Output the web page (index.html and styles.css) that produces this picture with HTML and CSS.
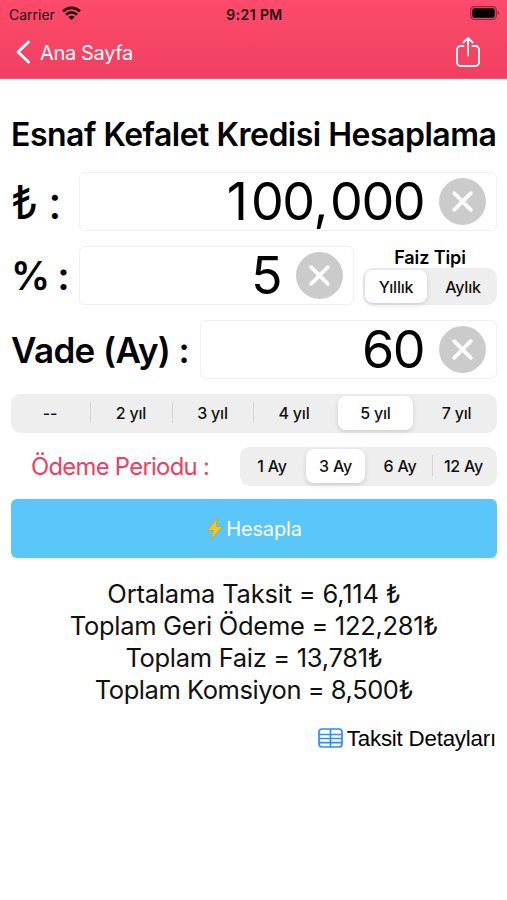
FILE: index.html
```html
<!DOCTYPE html>
<html lang="tr">
<head>
<meta charset="utf-8">
<title>Esnaf Kefalet Kredisi Hesaplama</title>
<link rel="stylesheet" href="styles.css">
</head>
<body>
<header class="top">
  <div class="status">
    <div class="carrier"><span>Carrier</span>
      <svg width="19" height="14" viewBox="0 0 19 14" fill="none" stroke="#250a10" stroke-width="2.700"><path d="M1 5.300a12.200 12.200 0 0 1 17 0"/><path d="M4 8.700a7.900 7.900 0 0 1 11 0"/><path d="M9.500 14 6.400 11a4.400 4.400 0 0 1 6.200 0z" fill="#250a10" stroke="none"/></svg>
    </div>
    <span class="clock">9:21 PM</span>
    <svg class="battery" width="30" height="14" viewBox="0 0 30 14"><rect x=".7" y=".7" width="25.600" height="12.600" rx="3.600" fill="none" stroke="#97293f" stroke-width="1.200"/><rect x="2.300" y="2.300" width="22.400" height="9.400" rx="2" fill="#000"/><path d="M27.500 4.800c1.900.7 1.900 3.700 0 4.400z" fill="#97293f"/></svg>
  </div>
  <nav class="nav">
    <a class="back"><svg width="16" height="26" viewBox="0 0 16 26" fill="none" stroke="#fff" stroke-width="3" stroke-linecap="round" stroke-linejoin="round"><path d="M13.500 3 3 13l10.500 10"/></svg><span>Ana Sayfa</span></a>
    <svg width="26" height="32" viewBox="0 0 26 32" fill="none" stroke="#fff" stroke-width="1.800" stroke-linecap="round" stroke-linejoin="round"><path d="M8.500 10H5.500a3.500 3.500 0 0 0-3.500 3.500v13a3.500 3.500 0 0 0 3.500 3.500h15a3.500 3.500 0 0 0 3.500-3.500v-13a3.500 3.500 0 0 0-3.500-3.500h-3M13 19.500V2M8.300 6.500 13 1.800l4.700 4.700"/></svg>
  </nav>
</header>
<main>
  <h1>Esnaf Kefalet Kredisi Hesaplama</h1>
  <div class="row">
    <label class="lira">₺ :</label>
    <div class="field"><span class="num"><span class="lead">1</span>00<span class="comma">,</span>000</span><svg class="clear" viewBox="0 0 48 48"><circle cx="24" cy="24" r="24"/><path d="m15.500 15.500 17 17m0-17-17 17"/></svg></div>
  </div>
  <div class="row">
    <label class="percent">% :</label>
    <div class="field"><span class="num">5</span><svg class="clear" viewBox="0 0 48 48"><circle cx="24" cy="24" r="24"/><path d="m15.500 15.500 17 17m0-17-17 17"/></svg></div>
    <div class="type">
      <span class="type-title">Faiz Tipi</span>
      <div class="seg type-seg"><span class="on">Yıllık</span><span>Aylık</span></div>
    </div>
  </div>
  <div class="row">
    <label class="term">Vade (Ay) :</label>
    <div class="field"><span class="num">60</span><svg class="clear" viewBox="0 0 48 48"><circle cx="24" cy="24" r="24"/><path d="m15.500 15.500 17 17m0-17-17 17"/></svg></div>
  </div>
  <div class="seg years"><span>--</span><span class="line">2 yıl</span><span class="line">3 yıl</span><span class="line">4 yıl</span><span class="on">5 yıl</span><span>7 yıl</span></div>
  <div class="period">
    <span class="period-label">Ödeme Periodu :</span>
    <div class="seg months"><span>1 Ay</span><span class="on">3 Ay</span><span>6 Ay</span><span class="line">12 Ay</span></div>
  </div>
  <button class="calc"><svg width="18" height="26" viewBox="0 0 18 26"><path d="M11.500 1.500 1.500 14.500h6L4.500 24 16.500 10.500h-6.300z" fill="#f3c623" stroke="#b9a645" stroke-width=".8" stroke-linejoin="round"/></svg><span>Hesapla</span></button>
  <div class="results">
    <p class="r1">Ortalama Taksit = 6,114 ₺</p>
    <p class="r2">Toplam Geri Ödeme = 122,281₺</p>
    <p class="r3">Toplam Faiz = 13,781₺</p>
    <p class="r4">Toplam Komsiyon = 8,500₺</p>
  </div>
  <a class="details"><svg width="25" height="20" viewBox="0 0 25 20" fill="none" stroke="#2d8cff" stroke-width="1.700"><rect x="1" y="1" width="23" height="18" rx="3"/><path d="M1 6.500h23M1 10.500h23M1 14.700h23M12.500 1v18"/></svg><span>Taksit Detayları</span></a>
</main>
</body>
</html>
```
FILE: styles.css
```css
* { box-sizing: border-box; }
body { margin: 0; background: #fff; color: #000; font-family: Inter, "Noto Sans", sans-serif; white-space: nowrap; }
svg { display: block; flex: none; }
.top { height: 79px; background: linear-gradient(#fe4b6c, #f03f60); border-bottom: 1px solid #f45c78; }
.status { height: 28px; display: grid; grid-template-columns: 1fr auto 1fr; align-items: center; padding: 0 7px 0 9px; font-size: 14px; color: #250a10; }
.carrier { display: flex; align-items: center; gap: 7px; }
.carrier svg { margin-top: -3px; }
.clock { font-weight: 600; letter-spacing: .4px; }
.battery { justify-self: end; margin-top: -2px; }
.nav { height: 48px; display: flex; align-items: center; justify-content: space-between; padding: 0 26px 0 15px; color: #fff; }
.back { display: flex; align-items: center; gap: 9px; font-size: 20px; letter-spacing: -.35px; }
.back span { padding-top: 1px; }
main { padding: 35px 10px 0 11px; }
h1 { margin: 0 0 17px; height: 41px; line-height: 41px; font-size: 32px; font-weight: 600; letter-spacing: -.5px; }
.row { display: flex; height: 59px; margin-bottom: 15px; align-items: stretch; }
.row label { display: flex; align-items: center; flex: none; }
.row .lira { width: 68px; font-size: 46px; font-feature-settings: "calt" 0; word-spacing: -3px; }
.row .percent { width: 68px; font-size: 39px; font-weight: 600; font-feature-settings: "calt" 0; letter-spacing: -1.400px; }
.row .term { width: 189px; font-size: 35px; font-weight: 600; letter-spacing: -.6px; font-feature-settings: "calt" 0; }
.field { flex: 1; display: flex; align-items: center; justify-content: flex-end; gap: 15px; padding-right: 10px; border: 1px solid #f0f0f0; border-radius: 6px; }
.num { font-size: 52px; line-height: 58px; letter-spacing: -1.500px; }
.lead { letter-spacing: 3px; }
.comma { letter-spacing: 1.500px; }
.clear { width: 47px; height: 47px; fill: #cbcbcb; stroke: #fff; stroke-width: 3.800; stroke-linecap: round; }
.clear circle { stroke: none; }
.type { width: 134px; margin-left: 9px; display: flex; flex-direction: column; }
.type-title { height: 22px; line-height: 23px; font-size: 18px; font-weight: 600; text-align: center; letter-spacing: -.1px; }
.seg { height: 39px; display: grid; background: #eee; border-radius: 10px; padding: 2px; font-size: 16px; letter-spacing: -.2px; font-weight: 500; color: #111; }
.seg span { display: flex; align-items: center; justify-content: center; position: relative; }
.seg .on { background: #fff; border-radius: 8px; box-shadow: 0 2px 5px #0002; }
.seg .line::before { content: ""; position: absolute; left: 0; top: 6px; bottom: 7px; width: 1px; background: #d3d3d3; }
.type-seg { grid-template-columns: 62px 1fr; height: 38px; }
.type-seg span:last-child { padding-left: 4px; }
.years { grid-template-columns: 77px 82px 81px 85px 75px 1fr; padding-bottom: 3px; }
.years span:nth-child(1) { padding-right: 3px; }
.years span:nth-child(4) { padding-right: 3px; }
.years span:last-child { padding-left: 5px; }
.period { display: flex; justify-content: space-between; align-items: center; height: 39px; margin: 14px 0 13px; }
.period-label { margin-left: 20px; font-size: 23.800px; letter-spacing: -.7px; color: #f23d61; }
.months { width: 257px; grid-template-columns: 64px 59px 67px 1fr; padding-bottom: 3px; }
.months span:nth-child(3) { padding-left: 3px; }
.months span:nth-child(1) { padding-right: 4px; }
.calc { width: 100%; height: 59px; border: 0; border-radius: 6px; background: #5ac6fa; color: #fff; display: flex; align-items: center; justify-content: center; gap: 2px; font: 20px Inter, sans-serif; letter-spacing: -.15px; }
.results { margin-top: 20px; text-align: center; font-size: 25.500px; letter-spacing: -.3px; color: #111; }
.results p { margin: 0; height: 32px; line-height: 32px; }
.results .r1 { letter-spacing: -.2px; }
.results .r4 { letter-spacing: -.45px; }
.details { display: flex; justify-content: flex-end; align-items: center; gap: 4px; height: 30px; margin: 17px 1px 0 0; font: 22.300px "Liberation Sans", sans-serif; letter-spacing: -.2px; }
.details span { padding-top: 1px; }
```
